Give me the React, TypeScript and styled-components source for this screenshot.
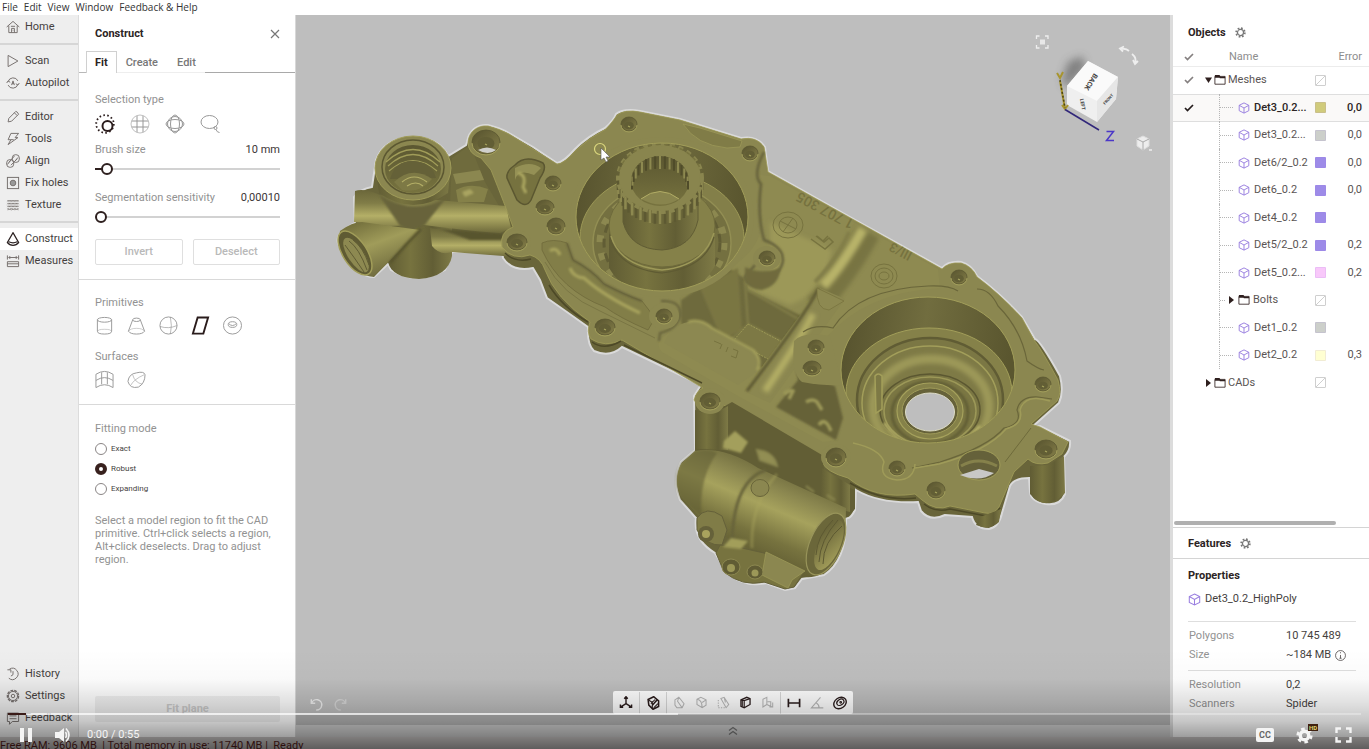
import React from "react";
import styled, { createGlobalStyle, css } from "styled-components";

const GlobalStyle = createGlobalStyle`
  * { box-sizing: border-box; }
  body { margin: 0; background: #fff; font: 11px/14px Roboto, "Liberation Sans", sans-serif; color: #453f3e; overflow: hidden; }
  button, input { font: inherit; color: inherit; margin: 0; }
  button { background: none; border: 0; padding: 0; cursor: pointer; }
  svg { display: block; flex: none; }
  h2, h3, p, dl, dd, fieldset, ul { margin: 0; padding: 0; border: 0; }
  h2, h3 { font-size: 11px; }
`;

/* ---------- layout ---------- */
const Page = styled.div`position: relative; display: flex; flex-direction: column; height: 100vh; overflow: hidden;`;
const MenuBar = styled.nav`
  display: flex; gap: 6px; flex: none; height: 15px; padding-left: 2px; background: #fff;
  font: 10px/15px "Open Sans", "Noto Sans", sans-serif;
  button { color: #333; }
`;
const Main = styled.div`display: flex; flex: 1; min-height: 0;`;
const Sidebar = styled.nav`
  display: flex; flex-direction: column; flex: none; width: 79px; padding: 1px 0 8px;
  background: #eee; border-right: 1px solid #dcdcdc;
`;
const NavItem = styled.button<{ $active?: boolean }>`
  display: flex; align-items: center; gap: 5px; height: 22px; padding-left: 6px; white-space: nowrap;
  background: ${p => (p.$active ? "#fff" : "transparent")};
  svg { color: ${p => (p.$active ? "#2a2020" : "#77716f")}; }
`;
const NavRule = styled.hr`width: 100%; height: 2px; margin: 5px 0; border: 0; background: #d6d6d6;`;
const Spacer = styled.div`flex: 1;`;

const Panel = styled.section`display: flex; flex-direction: column; flex: none; width: 217px; background: #fff; border-right: 1px solid #d8d8d8;`;
const PanelHead = styled.header`
  display: flex; align-items: center; justify-content: space-between; height: 36px; padding: 2px 15px 0 16px; color: #777;
  h2 { color: #2c2424; }
`;
const TabStrip = styled.div`display: flex; height: 22px; padding-left: 7px; background: linear-gradient(#b8b8b8, #b8b8b8) 0 100% / 7px 1px no-repeat, linear-gradient(90deg, #eee 126px, #a9a9a9 126px) 0 100% / 100% 1px no-repeat;`;
const Tab = styled.button<{ $active?: boolean }>`
  height: 22px; padding: 1px ${p => (p.$active ? 8 : 9)}px 0; font-weight: 500; color: #777;
  ${p => p.$active && css`color: #2c2424; font-weight: 700; background: #fff; border: 1px solid #d0d0d0; border-bottom: 0;`}
  & + & { margin-right: 1px; }
`;
const Block = styled.div`padding: 0 15px 0 16px; border-bottom: 1px solid #d9d9d9;`;
const BlockTitle = styled.h3<{ $top: number }>`padding-top: ${p => p.$top}px; font-weight: 400; color: #929292;`;
const IconRow = styled.div<{ $gap: number; $h: number }>`display: flex; align-items: center; gap: ${p => p.$gap}px; height: ${p => p.$h}px; margin-bottom: 3px; color: #989898;`;
const IconButton = styled.button<{ $active?: boolean; $muted?: boolean }>`color: ${p => (p.$active ? "#2a1c1c" : p.$muted ? "#b9b9b9" : "inherit")};`;
const SliderRow = styled.div`
  display: grid; grid-template-columns: 1fr auto; height: 48px; align-content: start;
  label { color: #929292; }
  output { color: #3c3535; }
`;
const Slider = styled.input<{ $fill: number }>`
  grid-column: 1 / -1; appearance: none; width: 100%; height: 12px; margin-top: 6px;
  background: linear-gradient(90deg, #2e201f ${p => p.$fill}px, #d2d2d2 ${p => p.$fill}px) center / 100% 2px no-repeat;
  &::-webkit-slider-thumb { appearance: none; width: 12px; height: 12px; border: 2px solid #2e201f; border-radius: 50%; background: #fff; }
`;
const ButtonPair = styled.div`display: grid; grid-template-columns: 1fr 1fr; gap: 10px; padding-bottom: 14px;`;
const OutlineButton = styled.button`height: 26px; border: 1px solid #dfdfdf; border-radius: 2px; color: #b9b9b9; font-weight: 500;`;
const BlockEnd = styled.div`height: 7px;`;
const Modes = styled.fieldset`display: grid; padding: 0 16px; row-gap: 8px; legend { padding: 17px 0 7px; color: #929292; }`;
const RadioLabel = styled.label`
  display: flex; align-items: center; gap: 4px; height: 12px; font-size: 8px; line-height: 12px;
  input { appearance: none; width: 12px; height: 12px; border: 1px solid #8a8585; border-radius: 50%; background: #fff; }
  input:checked { border: 4px solid #38211e; }
`;
const Hint = styled.p`padding: 19px 16px 0; line-height: 13px; color: #929292;`;
const FitButton = styled.button`height: 26px; margin: 0 15px 15px 16px; border-radius: 2px; background: #f0f0f0; color: #c9c9c9; font-weight: 700;`;

const Viewport = styled.main`position: relative; display: flex; flex-direction: column; flex: 1; min-width: 0; background: #bebebe;`;
const Scene = styled.div`display: flex; flex: 1; min-height: 0; & > svg { width: 100%; height: 100%; }`;
const UndoBar = styled.div`position: absolute; left: 14px; bottom: 26px; display: flex; gap: 11px; color: #eee; button + button { color: #d6d6d6; }`;
const ToolDock = styled.div`
  position: absolute; left: 50%; bottom: 23px; transform: translateX(-50%); display: flex; align-items: center;
  height: 23px; background: #fff; border-radius: 2px;
`;
const ToolGroup = styled.div`
  display: flex; align-items: center; height: 22px; gap: 9px; padding: 0 6px;
  & + & { border-left: 1px solid #d8d8d8; }
`;
const TimelineStrip = styled.div`flex: none; height: 11px; background: #b0b0b0;`;
const LogStrip = styled.button`display: flex; align-items: center; justify-content: center; flex: none; height: 12px; background: #cfcfcf; color: #777;`;

const Aside = styled.aside`display: flex; flex-direction: column; flex: none; width: 199px; background: #fff; border-left: 3px solid #dcdcdc;`;
const AsideHead = styled.header<{ $h: number }>`
  display: flex; align-items: center; gap: 9px; flex: none; height: ${p => p.$h}px; padding: 1px 0 0 15px; color: #777;
  h2 { color: #2c2424; }
`;
const Table = styled.table`
  width: 100%; border-collapse: collapse; table-layout: fixed;
  th, td { padding: 0; font-weight: 400; text-align: left; white-space: nowrap; }
  th { color: #8d8d8d; height: 17px; border-bottom: 1px solid #ececec; }
  th:last-child, td:last-child { text-align: right; padding-right: 7px; }
  th:nth-child(2) { padding-left: 24px; }
`;
const Row = styled.tr<{ $sel?: boolean }>`
  height: 27px; color: #5a5453;
  &:nth-child(even) { height: 28px; }
  ${p => p.$sel && css`background: #faf9f8; color: #2c2424; box-shadow: inset 0 1px #dedede, inset 0 -1px #dedede; td { font-weight: 500; }`}
`;
const Cell = styled.div<{ $pad?: number; $gap?: number }>`display: flex; align-items: center; height: 27px; gap: ${p => p.$gap ?? 4}px; padding-left: ${p => p.$pad ?? 0}px;`;
const Guide = styled.span<{ $w: number }>`
  flex: none; width: ${p => p.$w}px; height: 28px; border-left: 1px dotted #b5b5b5;
  background: repeating-linear-gradient(90deg, #b5b5b5 0 1px, transparent 1px 2px) 0 50% / 100% 1px no-repeat;
`;
const Swatch = styled.span<{ $c?: string }>`
  display: block; width: 11px; height: 11px; border-radius: 1px;
  ${p => (p.$c ? css`background: ${p.$c}; box-shadow: inset 0 0 0 1px rgba(160,130,230,.15);` : css`border: 1px solid #cfcfcf; background: linear-gradient(135deg, transparent 46%, #cfcfcf 46% 54%, transparent 54%);`)}
`;
const HScroll = styled.div`flex: none; width: 162px; height: 4px; margin: 0 0 2px 1px; border-radius: 2px; background: #b0b0b0;`;
const Features = styled.section`flex: none; border-top: 1px solid #d4d4d4; border-bottom: 1px solid #d4d4d4;`;
const Properties = styled.section`flex: none; height: 178px; padding: 10px 13px 0 15px; h3 { color: #2c2424; }`;
const PropName = styled.p`display: flex; align-items: center; gap: 4px; height: 32px; margin-bottom: 6px;`;
const PropList = styled.dl`
  display: grid; grid-template-columns: 97px 1fr; row-gap: 5px; padding: 7px 0 8px 1px; border-top: 1px solid #dedede;
  dt { color: #929292; }
  dd { display: flex; align-items: center; gap: 4px; }
`;
const StatusBar = styled.footer`flex: none; height: 12px; overflow: hidden; background: #cfcbca; color: #5a1f1c; line-height: 18px; white-space: nowrap;`;

const Player = styled.div`
  position: absolute; left: 0; right: 0; bottom: 0; height: 100px; padding: 64px 8px 0; pointer-events: none;
  background: linear-gradient(rgba(0,0,0,0) 0, rgba(0,0,0,.02) 30px, rgba(0,0,0,.12) 54px, rgba(0,0,0,.22) 72px, rgba(0,0,0,.36) 86px, rgba(0,0,0,.54) 100px);
`;
const Seek = styled.input`
  display: block; appearance: none; width: 100%; height: 2px;
  background: linear-gradient(90deg, #3a1b18 18px, rgba(255,255,255,.72) 18px, rgba(255,255,255,.72) 670px, rgba(255,255,255,.3) 670px);
  &::-webkit-slider-thumb { appearance: none; width: 0; height: 0; }
`;
const Controls = styled.div`display: flex; align-items: center; height: 34px; padding: 6px 9px 0 11px; color: #f4f4f4;`;
const VolumeButton = styled.button`margin-left: 21px;`;
const TimeText = styled.span`margin-left: 16px; line-height: 12px;`;
const ControlRight = styled.div`display: flex; align-items: center; gap: 22px; margin-left: auto;`;
const CC = styled.button`width: 18px; height: 14px; border-radius: 2px; background: #f4f4f4; color: #666; font-size: 9px; font-weight: 700; line-height: 14px;`;
const GearWrap = styled.button`position: relative;`;
const HD = styled.span`position: absolute; left: 12px; top: -3px; width: 10px; height: 7px; background: #40210f; color: #dfd36d; font-size: 6px; line-height: 7px; font-weight: 700;`;

/* ---------- icons ---------- */
const ICONS: Record<string, React.ReactNode> = {
  home: <><path d="M1 10 10 2l9 8M4 8v10h12V8M8 18v-6h4v6M10 14v1" /><path d="M7 9h6" /></>,
  scan: <path d="M3 2v16l14-8z" />,
  auto: <><path d="M3 8a7.5 7.5 0 0 1 14-1M17 12a7.5 7.5 0 0 1-14 1M1 10l2-3 3 2M19 10l-2 3-3-2M8 13l2-6 2 6M8.500 11h3" /></>,
  edit: <path d="M3 17l1-5L14 2q2 0 4 4L8 16zM12 4l4 4" />,
  tools: <path d="M7 2h11l-5 6h4L3 18l4-7H3zM7 11h4" />,
  align: <><rect x="1" y="8" width="10" height="11" rx="4.500" /><rect x="9" y="1" width="10" height="11" rx="4.500" /><path d="M4 12l8-9M7 16l9-9M2 15l4-5M13 10l4-5" /></>,
  holes: <><rect x="2" y="2" width="16" height="16" /><circle cx="10" cy="10" r="4" fill="#999" /></>,
  texture: <path d="M2 3l2 2 2-2 2 2 2-2 2 2 2-2 2 2 2-2M2 7l2 2 2-2 2 2 2-2 2 2 2-2 2 2 2-2M2 11l2 2 2-2 2 2 2-2 2 2 2-2 2 2 2-2M2 15l2 2 2-2 2 2 2-2 2 2 2-2 2 2 2-2M2 5l2-2 2 2 2-2 2 2 2-2 2 2 2-2 2 2M2 9l2-2 2 2 2-2 2 2 2-2 2 2 2-2 2 2M2 13l2-2 2 2 2-2 2 2 2-2 2 2 2-2 2 2M2 17l2-2 2 2 2-2 2 2 2-2 2 2 2-2 2 2" strokeWidth="1" />,
  cone: <path d="M10 1 2 15q3 4 8 4t8-4zM4 14q6 3 12 0" strokeWidth="1.800" />,
  measure: <><path d="M2 2v6M18 2v6M4 5h12M6 3 4 5l2 2M14 3l2 2-2 2" /><path d="M2 11h16v7H2zM2 14h16" /></>,
  history: <path d="M5 3a8 8 0 1 1-1 13M2 4h5v4M10 6v5l-3 2" />,
  settings: <><circle cx="10" cy="10" r="8" strokeDasharray="4 1.500" strokeWidth="2" /><circle cx="10" cy="10" r="6.500" /><circle cx="10" cy="10" r="2.500" /></>,
  feedback: <path d="M2 3h16v12H9l-4 4v-4H2zM5 7h10M5 11h10" />,
  close: <path d="M2 2l16 16M18 2 2 18" />,
  brush: <><circle cx="10" cy="10" r="8.800" strokeDasharray="1.600 2.350" strokeWidth="1.800" /><circle cx="12.500" cy="12" r="5" strokeWidth="2" fill="#fff" /></>,
  rect: <><circle cx="10" cy="10" r="9" strokeOpacity=".6" /><path d="M7 2v16M13 2v16M2 7h16M2 13h16" /></>,
  sphereSel: <><circle cx="10" cy="10" r="7.500" /><ellipse cx="10" cy="10" rx="4.500" ry="9" /><ellipse cx="10" cy="10" rx="9" ry="4.500" /></>,
  lasso: <><ellipse cx="9.500" cy="8" rx="8.500" ry="6.500" /><circle cx="15.500" cy="14" r="1.500" /><path d="M16 15.500q1 3 3.500 3" /></>,
  cyl: <><ellipse cx="10" cy="4" rx="7.500" ry="2.500" /><path d="M2.500 4v12q0 3 7.500 3t7.500-3V4" /><path d="M3 16q0-2 7-2t7 2" strokeOpacity=".5" /></>,
  frustum: <><ellipse cx="10" cy="4" rx="4" ry="1.800" /><path d="M6 4 1.500 16q2 3 8.500 3t8.500-3L14 4" /><path d="M1.500 16q2-3 8.500-3t8.500 3" strokeOpacity=".5" /></>,
  ball: <><circle cx="10" cy="10" r="9" /><path d="M12 1q2 9 0 18M1 11q9 3 18-1" strokeOpacity=".7" /></>,
  plane: <path d="M7 1.500h11L13 18.500H2z" strokeWidth="2" />,
  torus: <><ellipse cx="10" cy="10" rx="9.500" ry="9" /><ellipse cx="10" cy="9" rx="4.500" ry="3" /><path d="M6 8q4 4 8 0" /></>,
  surf: <path d="M1 4.500q9-6 18 0v14q-9-6-18 0zM7 2.500v12.500M13 2.500v12.500M1 11q9-6 18 0" />,
  blob: <><path d="M1 12Q2 4 10 3q8-2 9 2 0 9-7 13-9 2-11-6z" /><path d="M6 5q2 8 10 10M4 16q3-6 14-11" strokeOpacity=".6" /></>,
  cube: <path d="M10 1.500 18 5.500v9L10 18.500 2 14.500v-9zM2 5.500 10 10l8-4.500M10 10v8.500" />,
  folder: <><path d="M1.500 4h17v13h-17z" /><path d="M1.500 3h7l2 3h8M1.500 5h8" strokeWidth="2.500" /></>,
  check: <path d="M2 10l5 5L18 4" strokeWidth="3.400" />,
  gear: <><circle cx="10" cy="10" r="5.500" strokeWidth="2.200" /><circle cx="10" cy="10" r="8" strokeDasharray="3.140 3.140" strokeWidth="3" /></>,
  info: <><circle cx="10" cy="10" r="9" /><path d="M10 4v2M10 9v6M8 15h4" /></>,
  undo: <path d="M2 2v6h6M2.500 8a8 8 0 1 1 7 10.500" strokeWidth="2.200" />,
  redo: <path d="M18 2v6h-6M17.500 8a8 8 0 1 0-7 10.500" strokeWidth="2.200" />,
  axes: <path d="M10 11V2M10 11l-8 5M10 11l8 5M7.500 4 10 1l2.500 3M2 12v4h4M18 12v4h-4" strokeWidth="2" />,
  section: <><path d="M3 5l8-4 7 6v8l-8 4-6-6z" strokeWidth="2.200" /><path d="M8 15l8-9M7 11l6-6M11 17l6-6M9 13l6-7M4 6l5 3v9" strokeWidth="1.500" /></>,
  cutA: <path d="M3 6l6-4 8 10-3 6H6l-3-4zM9 2 7 8l7 10" />,
  cutB: <path d="M3 5l6-3 8 4v8l-6 4-8-5zM3 5q8 1 8 13M11 10l6-4" />,
  cutC: <><path d="M6 4l5-2 7 11-4 5zM11 2l2 8" /><path d="M2 6v12h11" strokeDasharray="2 2" /></>,
  box: <><path d="M3 6l9-4 5 2v9l-9 5-5-2z" strokeWidth="2" /><path d="M8 7v11M3 6l5 1 9-3M5 7v9" strokeWidth="1.800" /></>,
  wing: <path d="M3 5l6-3v11l-6 4zM10 9h5v6M9 13l8 4M18 10v7h-5" />,
  ruler: <path d="M2 4v12M18 4v12M2 10h16" strokeWidth="2.400" />,
  angle: <path d="M15 2 2 17h17M9 10q4 2 4 7" />,
  rings: <><ellipse cx="10" cy="10" rx="9.500" ry="7.500" transform="rotate(-35 10 10)" strokeWidth="2" /><ellipse cx="11" cy="9.500" rx="5.500" ry="4" transform="rotate(-35 10 10)" strokeWidth="1.700" /><circle cx="11" cy="9" r="1.200" /></>,
  up: <path d="M2 9l8-6 8 6M2 17l8-6 8 6" strokeWidth="2.400" />,
};
function Icon({ n, s = 13, w = 1.4 }: { n: string; s?: number; w?: number }) {
  return <svg width={s} height={s} viewBox="0 0 20 20" fill="none" stroke="currentColor" strokeWidth={w} aria-hidden="true">{ICONS[n]}</svg>;
}

/* ---------- scanned casting ---------- */
const F = "#8b8750";
function Hole({ x, y, rx = 8, ry = 7, lug = 0 }: { x: number; y: number; rx?: number; ry?: number; lug?: number }) {
  return <g>
    {lug > 0 && <ellipse cx={x} cy={y} rx={lug} ry={lug - 2} fill={F} />}
    <ellipse cx={x} cy={y} rx={rx} ry={ry} fill="url(#holeG)" stroke="#5b5731" strokeWidth=".8" />
    <ellipse cx={x} cy={y + 1.5} rx={rx * 0.6} ry={ry * 0.55} fill="#625e35" />
    <path d={`M${x - rx} ${y + 1}a${rx} ${ry} 0 0 0 ${rx * 2} 0`} fill="none" stroke="#a39f5c" strokeWidth="1" />
    <path d={`M${x - 1} ${y + 2}l2 1`} stroke="#aaa660" strokeWidth="1.200" />
  </g>;
}
const SIL = "M467 142C469 130 478 124 488 125Q500 128 509 133L533 147 557 163Q564 162 575 149Q588 136 605 128 614 120 616 114 624 108 640 111L680 119 741 138Q757 135 765 147L768 171 859 222 942 268Q948 261 961 262 972 265 977 276 1000 293 1022 317L1035 339Q1040 340 1060 376 1064 392 1059 403L1031 428 1040 426 1070 441Q1071 450 1064 457L1065 494Q1060 506 1046 504 1031 502 1030 492L1029 478Q1014 478 1010 486L1002 513Q999 527 989 529 975 529 972 517L945 515Q930 522 921 511L918 502Q880 504 856 490L855 510Q850 520 846 518 847 560 824 575L802 579 795 588 785 590 766 583Q745 588 727 573L715 553Q693 540 696 518L680 500Q672 480 681 462L695 450 694 396 701 385 622 347Q610 358 594 351 587 345 588 327 567 312 547 298L540 280 533 268Q512 272 503 258L502 251 452 252 445 270Q417 286 391 270L388 264 374 277Q355 277 338 243 335 233 355 223L354 197Q360 189 372 187L376 160Q384 138 413 137 440 138 448 156L466 145Z";

function Casting() {
  const teeth = Array.from({ length: 27 }, (_, i) => {
    const a = (i / 26) * Math.PI;
    return { x: 660 + Math.cos(a) * 42, y: 179 + Math.sin(a) * 34 };
  });
  const splines = Array.from({ length: 19 }, (_, i) => {
    const a = Math.PI + (i / 18) * Math.PI;
    return { x: 660 + Math.cos(a) * 28, y: 181 + Math.sin(a) * 25 };
  });
  return <g>
    <path d={SIL} fill="#69653a" stroke="#dadada" strokeWidth="2" />
    {/* intake pipes */}
    <path d="M388 218H452V256Q448 277 419 279 392 278 388 262Z" fill="url(#cylV)" />
    <path d="M430 228 515 240V257L452 252Q440 256 432 246Z" fill="url(#tubeH)" />
    <path d="M452 158 470 145 485 182 512 228 450 205Z" fill="#6f6b3d" />
    <path d="M453 174 480 170 484 180 456 184Z" fill={F} /><path d="M456 190Q470 182 488 189L484 202H458Z" fill="#858149" />
    <path d="M462 192l8-3 4 4-9 4z" fill="#b9b46c" opacity=".7" filter="url(#b1)" />
    <path d="M440 229 510 234 511 240 470 240Z" fill="#59552f" filter="url(#b1)" />
    <path d="M355 191Q364 188 380 195L448 201 506 206 511 228 500 233Q460 230 424 225L388 226 354 222Z" fill="url(#tubeH)" />
    <path d="M379 195Q413 216 446 198L424 226 412 230 400 226Z" fill="#67633a" filter="url(#b1)" />
    <path d="M340 231Q352 222 362 222L420 230Q400 250 374 277 350 275 338 244Z" fill="url(#tubeD)" />
    <path d="M421 229Q404 246 390 263" fill="none" stroke="#59552f" strokeWidth="3" filter="url(#b1)" />
    <ellipse cx="355" cy="253" rx="12" ry="25" transform="rotate(-33 355 253)" fill="#5f5b33" stroke="#a19d59" strokeWidth="1.500" />
    <ellipse cx="356" cy="255" rx="8" ry="20" transform="rotate(-33 356 255)" fill="#8d8951" /><path d="M349 241q10 7 18 29M353 240q10 7 16 25M345 245q9 12 19 27" stroke="#605c34" fill="none" />
    <path d="M375 165 379 193Q413 217 448 193L451 165Z" fill="url(#cylV)" />
    <ellipse cx="413" cy="168" rx="38" ry="32" fill={F} stroke="#a09c59" />
    <ellipse cx="413" cy="167" rx="31" ry="27" fill="#8b8750" stroke="#5b5731" strokeWidth="1.500" />
    <ellipse cx="413" cy="169" rx="28" ry="24" fill="url(#bore)" />
    <g fill="none" stroke="#a19d59" strokeWidth="1.200"><path d="M386 162Q413 137 440 162M388 166Q413 143 438 166M389 171Q413 150 437 171" /></g>
    <path d="M390 179Q396 160 413 161 432 162 436 178" fill="#656138" />
    <path d="M394 182Q412 165 432 179 420 194 402 190Z" fill="#7d7945" /><path d="M402 182Q414 172 427 182M407 186Q416 180 423 186" fill="none" stroke="#b4af67" strokeWidth="1.200" />

    {/* mounting faces */}
    <path d="M468 142C469 131 478 125 488 126Q500 129 509 134L557 164Q564 164 576 150 590 137 606 129 614 120 617 115 625 109 640 112L680 120 741 139Q757 136 764 147L768 172 942 269Q948 262 961 263 972 266 977 277 1000 294 1022 318L1034 340Q1042 350 1058 380 1062 394 1057 401L1031 424 1040 427 1068 442 1062 454 1048 463Q1035 466 1028 459L1014 472 999 507Q994 515 985 513L950 506Q936 512 922 500L915 494Q875 500 848 478 826 472 822 462L722 404Q704 416 694 400 697 390 703 388L622 340Q605 348 591 339 586 332 590 322 555 298 545 270 541 258 530 255 513 261 502 247 499 232 513 227 505 205 491 170L481 158Q468 154 468 142Z" fill={F} stroke="#a19d59" strokeWidth=".8" />
    <path d="M592 342Q604 351 621 341M624 345 702 383M850 483Q882 502 916 498M924 504Q935 513 950 509L986 516Q994 517 1000 508M549 285Q562 307 588 322M505 253Q515 263 531 259" stroke="#4d4927" fill="none" strokeWidth="1.500" />

    {/* engraved deck and casting pockets */}
    <path d="M760 175 770 176 938 269 940 288Q865 292 825 339L798 352 794 372Q805 400 838 440L823 442 738 396 662 352Q650 340 680 328L681 298 730 268Q760 250 762 222Z" fill="#8e8a51" />
    <path d="M770 222 832 250 822 290 790 305 748 288 770 275Z" fill="#9c9858" filter="url(#b2)" />
    <path d="M681 300 728 268 744 278 748 290 806 318 787 375 758 366 720 343 681 324Z" fill="#6e6a3c" filter="url(#b1)" />
    <path d="M700 288 738 268 742 330 722 340Z" fill="#7a7643" filter="url(#b1)" />
    <path d="M745 280 748 325 730 340M748 324 788 345M748 290 800 320" stroke="#837f49" fill="none" strokeWidth="2" filter="url(#b1)" />
    <path d="M748 324 786 344 772 361 733 341Z" fill="#7d7945" stroke="#a5a15c" strokeWidth=".8" strokeDasharray="2 1" />
    <path d="M688 322Q700 318 712 328L753 350Q764 360 754 374L738 385 664 343Q672 325 688 322Z" fill="#8c8851" />
    <path d="M688 322Q700 318 712 328L753 350Q763 360 757 370" fill="none" stroke="#a29e5a" strokeWidth="2.500" filter="url(#b1)" />
    <path d="M868 232Q848 270 816 306" stroke="#59552f" strokeWidth="25" fill="none" filter="url(#b2)" opacity=".4" />
    <path d="M863 229Q842 266 823 286" stroke="#b8b369" strokeWidth="10" fill="none" filter="url(#b2)" />
    <path d="M849 232Q838 258 815 282" stroke="#827e48" strokeWidth="4" fill="none" filter="url(#b1)" />
    <path d="M820 288 845 299 770 403 744 391Z" fill="#8b8750" /><path d="M818 289Q811 307 747 391" stroke="#605c34" strokeWidth="3" fill="none" filter="url(#b1)" />
    <path d="M813 314Q800 340 765 391" stroke="#b3ae65" strokeWidth="7" fill="none" filter="url(#b2)" />
    <path d="M817 288 844 301 829 310Q816 310 817 288Z" fill="#8d8951" stroke="#78743f" strokeWidth=".8" />
    <path d="M797 372 835 386 843 418 836 440 776 407 798 380Z" fill="#666239" filter="url(#b1)" />
    <path d="M784 394q6-5 9-3l-4 8M806 402q7-4 11 0l5 8M819 425q6-9 12 6" stroke="#9c9858" strokeWidth="3.500" fill="none" filter="url(#b1)" />
    <g fill="#76723f" fontFamily="Roboto" fontWeight="500"><text transform="translate(855 221) rotate(208)" fontSize="14">1 707 305</text><text transform="translate(913 253) rotate(208)" fontSize="13">III/3</text></g>
    <g fill="none" stroke="#77733f"><ellipse cx="788" cy="225" rx="15" ry="13" /><ellipse cx="788" cy="225" rx="9" ry="8" /><path d="M780 221l16 8M793 218l-10 14" /><ellipse cx="884" cy="276" rx="13" ry="12" /><ellipse cx="884" cy="276" rx="9" ry="8" /><ellipse cx="884" cy="276" rx="5" ry="4" /><path d="M811 239l14 10 8-7-4-4-5 4-8-6M817 236l6 5 5-5" strokeWidth="1.500" /><path d="M714 341l7 3M722 344l-2 5M728 347l-2 5M733 349l5 2-2 7-5-2" /></g>

    {/* recesses round the first bearing seat */}
    <path d="M515 165Q525 154 543 163 547 168 540 178L531 200Q526 209 517 200L507 178Q506 171 515 165Z" fill="#76723f" stroke="#5b5731" strokeWidth="1.500" />
    <path d="M515 168Q530 160 541 168L534 175Q518 168 515 180Z" fill="#949055" /><path d="M518 173q9 2 5 14l3 6" fill="none" stroke="#aca761" strokeWidth="3" filter="url(#b1)" />
    <path d="M542 243Q553 238 567 243L573 260Q592 270 604 284 625 295 642 301L655 318 648 330Q620 318 605 307 560 290 542 250Z" fill="#827e48" stroke="#6e6a3b" strokeWidth=".8" />
    <path d="M550 251q6-5 10 4M570 268q3 9 14 10 20 18 56 35" fill="none" stroke="#a6a15c" strokeWidth="3.500" filter="url(#b1)" />
    <path d="M567 243 573 260Q592 270 604 284 625 295 642 301" fill="none" stroke="#65613a" strokeWidth="2" filter="url(#b1)" />
    <path d="M545 262Q562 295 600 311L655 338" fill="none" stroke="#7a7644" strokeWidth="1" />
    <path d="M683 124Q696 145 727 148L740 147 742 141 700 128Z" fill="#807c47" stroke="#9c9858" strokeWidth=".8" />
    <path d="M764 152Q752 175 761 184 757 215 764 240 783 247 783 260 781 275 764 280 748 289 745 277L755 265" fill="none" stroke="#65613a" strokeWidth="2.500" filter="url(#b1)" />
    <path d="M745 267Q760 275 780 268 780 285 762 290 748 290 745 278Z" fill="#6f6b3d" filter="url(#b1)" />
    <path d="M661 301Q682 300 680 316 677 329 660 333L659 341" fill="none" stroke="#65613a" strokeWidth="2" filter="url(#b1)" />

    <ellipse cx="662" cy="217" rx="92" ry="80" fill={F} />
    <g clipPath="url(#c1)">
      <ellipse cx="662" cy="217" rx="87" ry="74" fill="url(#wall)" />
      <ellipse cx="662" cy="238" rx="82" ry="65" fill="#837f49" stroke="#9c9857" />
      <ellipse cx="662" cy="243" rx="69" ry="58" fill="#747040" stroke="#928e53" strokeWidth="1.500" />
      <ellipse cx="662" cy="243" rx="62" ry="52" fill="none" stroke="#8c8850" strokeWidth="7" strokeDasharray="7 11" />
      <ellipse cx="662" cy="243" rx="58" ry="50" fill="none" stroke="#615d35" strokeWidth="3" strokeDasharray="9 6" />
      <path d="M609 222V268Q625 296 662 296 700 295 715 266V222Z" fill="url(#cylV)" />
    </g>
    <ellipse cx="662" cy="226" rx="53" ry="41" fill="#858149" stroke="#6e6a3b" />
    <path d="M611 236Q620 266 662 270 704 266 714 233" fill="none" stroke="#9c9858" strokeWidth="1.500" />
    <path d="M610 239Q620 269 662 273 705 268 714 237" fill="none" stroke="#5f5b33" strokeWidth="1.200" />
    <path d="M623 190V222Q630 249 662 250 692 248 698 220V190Z" fill="url(#cylV)" stroke="#605c34" />
    <path d="M618 178V196Q630 222 661 224 694 220 702 194V178Z" fill="#6b673a" />
    {teeth.map((t, i) => <path key={i} d={`M${t.x} ${t.y - 2}v13`} stroke={i % 2 ? "#8d8950" : "#5d5932"} strokeWidth="2.500" />)}
    <ellipse cx="660" cy="178" rx="41" ry="33" fill="#89854e" />
    <ellipse cx="660" cy="178" rx="42" ry="34" fill="none" stroke="#89854e" strokeWidth="4" strokeDasharray="5 4" />
    <path d="M619 171Q627 147 660 144 693 147 701 171" fill="none" stroke="#77733f" strokeWidth="1.500" strokeDasharray="4 4" />
    <ellipse cx="660" cy="181" rx="29" ry="25" fill="url(#bore)" />
    {splines.map((t, i) => <path key={i} d={`M${t.x} ${t.y}v${13 - Math.abs(i - 9) / 2}`} stroke={i % 2 ? "#8d8950" : "#504c2a"} strokeWidth="2" />)}
    <path d="M641 199Q660 184 679 199 662 210 641 199Z" fill="#88844d" /><path d="M641 199Q660 184 679 199" fill="none" stroke="#b1ac65" />
    <ellipse cx="662" cy="217" rx="86" ry="74" fill="none" stroke="#a19d59" strokeWidth="1" />

    {/* second bearing seat */}
    <path d="M803 332Q815 324 833 328 858 289 928 286 949 285 958 291M977 289Q990 289 998 306 1021 329 1027 361 1038 369 1044 370M1052 399 1038 397Q1020 396 1017 410 1023 424 1004 428 988 447 940 462L912 468" fill="none" stroke="#6a663a" strokeWidth="1.200" />
    <path d="M1050 401Q1025 393 1020 410 1024 424 1006 429 987 451 939 464L915 468M853 443Q880 449 884 462 878 478 897 480 914 480 915 464" fill="none" stroke="#9f9b59" strokeWidth="1.500" />
    <g clipPath="url(#c2)">
      <ellipse cx="928" cy="370" rx="87" ry="73" fill="url(#wall)" />
      <ellipse cx="929" cy="393" rx="83" ry="65" fill="#858149" stroke="#a29e5a" />
      <ellipse cx="930" cy="400" rx="73" ry="62" fill="#7b7744" stroke="#605c34" strokeWidth="2.500" />
      <ellipse cx="930" cy="403" rx="68" ry="57" fill="#7e7a46" stroke="#a29e5a" strokeWidth="1.500" />
      <ellipse cx="931" cy="407" rx="58" ry="48" fill="none" stroke="#9c9858" strokeWidth="9" filter="url(#b2)" />
      <ellipse cx="930" cy="410" rx="50" ry="36" fill="#7a7643" stroke="#5b5731" strokeWidth="1.500" />
      <ellipse cx="930" cy="411" rx="46" ry="34" fill="none" stroke="#9c9858" strokeWidth="1.500" />
      <ellipse cx="930" cy="413" rx="38" ry="31" fill="none" stroke="#625e35" strokeWidth="3" filter="url(#b1)" />
      <path d="M875 376q3-4 7 0v33l-6 4z" fill="#7d7945" stroke="#a39f5a" strokeWidth="1.500" />
      <path d="M884 423Q898 446 928 448 962 447 980 426" fill="none" stroke="#b3ae66" strokeWidth="3" filter="url(#b1)" />
    </g>
    <ellipse cx="930" cy="411" rx="33" ry="28" fill="#858149" stroke="#a5a15c" strokeWidth="1.200" />
    <ellipse cx="930" cy="411" rx="28" ry="23" fill="#66623a" stroke="#9f9b59" />
    <ellipse cx="930" cy="412" rx="24.500" ry="19" fill="#bebebe" stroke="#deddc8" />
    <ellipse cx="928" cy="370" rx="87" ry="73" fill="none" stroke="#a19d59" />
    <ellipse cx="979" cy="465" rx="21" ry="15" fill="#65613a" stroke="#a19d59" />
    <path d="M961 466Q978 456 997 466" fill="none" stroke="#85814b" strokeWidth="3" /><path d="M960 475 979 469 994 473Q980 483 960 475Z" fill="#c8c8c6" />
    <path d="M1031 428 1005 462" stroke="#6e6a3b" /><path d="M1030 466V494Q1046 513 1065 493L1064 456 1048 465Z" fill="url(#cylV)" />
    <path d="M980 517 1001 509 999 522Q990 531 976 525Z" fill="url(#cylV)" />

    {/* lower actuator barrel */}
    <path d="M695 410Q710 416 732 402L822 455 825 478 855 490V509L846 518 800 500 720 460 695 451Z" fill="#625e35" />
    <path d="M697 410Q708 418 728 406V450L695 449Z" fill="url(#cylV)" /><path d="M822 468 850 485V512L838 509 820 498Z" fill="url(#cylV)" />
    <path d="M724 441 735 431 748 442 741 453 723 448Z" fill="#a39f5b" filter="url(#b1)" />
    <path d="M757 450Q774 452 777 466L760 460ZM806 486l8 6M827 495l8 5" fill="#928e53" stroke="#8b8750" strokeWidth="2" filter="url(#b1)" />
    <path d="M695 451Q724 446 758 468L846 508Q846 560 823 573 805 583 790 570L738 543Q710 530 698 515L681 497Q673 480 681 464Z" fill="url(#barrel)" />
    <path d="M695 451Q710 448 717 453 698 480 702 517L681 499Q671 480 681 463Z" fill="#625e35" opacity=".6" filter="url(#b1)" />
    <path d="M766 470Q734 480 732 541" fill="none" stroke="#67633a" strokeWidth="3" filter="url(#b1)" />
    <path d="M777 474Q750 505 752 548" fill="none" stroke="#aca75f" strokeWidth="3" opacity=".4" filter="url(#b1)" />
    <ellipse cx="826" cy="544" rx="16" ry="33" transform="rotate(24 826 544)" fill="#6b673a" stroke="#98945a" strokeWidth="1.200" />
    <ellipse cx="829" cy="545" rx="11" ry="27" transform="rotate(24 829 545)" fill="url(#mouth)" />
    <path d="M819 562q1-22 19-42M823 564q0-22 19-38M816 555q1-19 17-35" fill="none" stroke="#5d5932" />
    <ellipse cx="760" cy="488" rx="9" ry="8.500" fill="#8b8750" stroke="#6a663a" />
    <path d="M697 518Q706 505 722 516L727 530 722 545Q706 546 697 530Z" fill="#807c47" stroke="#65613a" /><ellipse cx="706" cy="534" rx="8" ry="8" fill="#65613a" /><ellipse cx="706" cy="534" rx="4" ry="4" fill="#a8a35e" />
    <path d="M720 545 742 548 764 553 804 572 794 587 785 589 764 582Q742 587 724 572L716 553Z" fill="#77733f" stroke="#65613a" />
    <path d="M723 547 741 549 748 541 731 538Z" fill="#a29e5a" filter="url(#b1)" /><path d="M766 552 805 571 792 580 788 588 762 575Z" fill="#8b8750" stroke="#9c9858" strokeWidth=".8" />
    <g fill="#605c34" stroke="#8d8951"><ellipse cx="731" cy="567" rx="9" ry="8" /><ellipse cx="755" cy="572" rx="8" ry="7" /></g><g fill="#9c9858"><circle cx="731" cy="568" r="4" /><circle cx="755" cy="573" r="3.500" /></g>

    <Hole x={486} y={142} rx={14} ry={12} /><path d="M478 150q9-5 18 0-8 6-18 0z" fill="#d0d0cc" />
    <Hole x={629} y={124} /><Hole x={750} y={153} rx={8} /><Hole x={767} y={258} lug={14} /><Hole x={664} y={316} lug={15} />
    <Hole x={605} y={327} rx={10} ry={8} /><Hole x={517} y={242} rx={10} ry={8} lug={14} /><Hole x={553} y={183} /><Hole x={545} y={207} rx={9} /><Hole x={556} y={226} rx={9} ry={8} />
    <path d="M794 341Q803 331 830 336L842 385Q824 386 802 382 791 374 794 341Z" fill={F} /><Hole x={816} y={347} /><Hole x={812} y={368} rx={9} />
    <Hole x={959} y={277} /><Hole x={1043} y={384} /><Hole x={897} y={468} /><Hole x={936} y={490} rx={9} ry={8} /><Hole x={1046} y={449} rx={11} ry={9} />
    <Hole x={710} y={401} rx={10} ry={8} lug={15} /><Hole x={836} y={457} rx={10} ry={9} lug={15} />
    <circle cx="600" cy="149" r="5.500" fill="none" stroke="#dcd87e" strokeWidth="1.200" />
    <path d="M601 148v12l3-2 2 4 2-1-2-4h4z" fill="#fff" stroke="#555" strokeWidth=".6" />
  </g>;
}

function NavCube() {
  return <g>
    <g fill="none" stroke="#eee" strokeWidth="1.300"><path d="M1036.500 39v-3h3M1045 36h3v3M1048 45v3h-3M1039.500 48h-3v-3" /><path d="M1121 49q5-1 8 2M1124 46.500l-4 2 3 3M1132 54q5 4 3 9M1133 60l2 4 3-3" strokeWidth="1.800" /></g>
    <rect x="1040" y="39.500" width="5" height="5" fill="#e8e8e8" />
    <path d="M1068 62l14-6 4 12-20 20-4-8z" fill="#444" opacity=".5" filter="url(#b3)" />
    <path d="M1088 61 1118 77 1116 99 1097 122 1067 105V86Z" fill="#efefef" />
    <path d="M1088 61 1118 77 1097 101 1067 86Z" fill="#fafafa" /><path d="M1118 77 1116 99 1097 122V101Z" fill="#e6e6e6" />
    <g fill="#444" fontFamily="Roboto" fontWeight="700"><text transform="translate(1094 73) rotate(123)" fontSize="7">BACK</text><text transform="translate(1080 99) rotate(80)" fontSize="5">LEFT</text><text transform="translate(1105 105) rotate(-48)" fontSize="4">FRONT</text></g>
    <path d="M1060 81l5 28M1057 73l3 5 3-6M1062 105l3 4 3-4" stroke="#a8952e" strokeWidth="2" fill="none" /><path d="M1060 80l5 28" stroke="#4d4410" strokeWidth="1.500" strokeDasharray="2 2" />
    <path d="M1065 109.500 1099 130" stroke="#31277a" strokeWidth="1.500" /><path d="M1106.500 131.500h7l-7 9h7.500" fill="none" stroke="#4b37c8" strokeWidth="1.500" />
    <path d="M1137 139l6-3 6 3v7l-6 4-6-4z" fill="#ededed" stroke="#ddd" /><path d="M1137 139l6 3 6-3M1143 142v8" stroke="#aaa" fill="none" /><path d="M1149 150h3" stroke="#eee" strokeWidth="1.500" />
  </g>;
}

function SceneView() {
  return <Scene><svg viewBox="296 15 874 699" preserveAspectRatio="xMidYMid meet" role="img" aria-label="3D scan">
    <defs>
      <linearGradient id="holeG" x1="0" y1="0" x2="1" y2="1"><stop offset="0" stopColor="#56522e" /><stop offset="1" stopColor="#857f49" /></linearGradient>
      <linearGradient id="cylV"><stop offset="0" stopColor="#605c34" /><stop offset=".35" stopColor="#77733f" /><stop offset=".7" stopColor="#625e35" /><stop offset="1" stopColor="#7e7a46" /></linearGradient>
      <linearGradient id="tubeH" x1="0" y1="0" x2="0" y2="1"><stop offset="0" stopColor="#6b673a" /><stop offset=".3" stopColor="#807c47" /><stop offset=".6" stopColor="#b4af67" /><stop offset="1" stopColor="#6d693b" /></linearGradient>
      <linearGradient id="tubeD" x1=".3" y1="0" x2=".8" y2=".9"><stop offset="0" stopColor="#77733f" /><stop offset=".4" stopColor="#a09c5a" /><stop offset="1" stopColor="#68643a" /></linearGradient>
      <linearGradient id="bore" x1="0" y1="0" x2="0" y2="1"><stop offset="0" stopColor="#5b5731" /><stop offset="1" stopColor="#77733f" /></linearGradient>
      <linearGradient id="wall" x1="0" y1="0" x2="1" y2=".1"><stop offset="0" stopColor="#55512d" /><stop offset=".5" stopColor="#716d3f" /><stop offset="1" stopColor="#5a562f" /></linearGradient>
      <linearGradient id="barrel" gradientUnits="userSpaceOnUse" x1="780" y1="465" x2="740" y2="560"><stop offset="0" stopColor="#6a663a" /><stop offset=".22" stopColor="#8a864f" /><stop offset=".42" stopColor="#a6a25d" /><stop offset=".7" stopColor="#77733f" /><stop offset="1" stopColor="#5a562f" /></linearGradient>
      <linearGradient id="mouth" x1="0" y1="0" x2="1" y2="1"><stop offset="0" stopColor="#5d5932" /><stop offset="1" stopColor="#aaa55e" /></linearGradient>
      <filter id="b1" x="-20%" y="-20%" width="140%" height="140%"><feGaussianBlur stdDeviation="1" /></filter>
      <filter id="b2" x="-30%" y="-30%" width="160%" height="160%"><feGaussianBlur stdDeviation="2" /></filter>
      <filter id="b3" x="-50%" y="-50%" width="200%" height="200%"><feGaussianBlur stdDeviation="4" /></filter>
      <clipPath id="c1"><ellipse cx="662" cy="217" rx="86" ry="74" /></clipPath>
      <clipPath id="c2"><ellipse cx="928" cy="370" rx="87" ry="73" /></clipPath>
    </defs>
    <Casting /><NavCube />
  </svg></Scene>;
}

/* ---------- data ---------- */
const NAV: ([string, string] | null)[] = [["home", "Home"], null, ["scan", "Scan"], ["auto", "Autopilot"], null, ["edit", "Editor"], ["tools", "Tools"], ["align", "Align"], ["holes", "Fix holes"], ["texture", "Texture"], null, ["cone", "Construct"], ["measure", "Measures"]];
type Item = { name: string; kind: "root" | "mesh" | "group"; open?: boolean; color?: string; error?: string; sel?: boolean };
const ITEMS: Item[] = [
  { name: "Meshes", kind: "root", open: true },
  { name: "Det3_0.2...", kind: "mesh", color: "#d0cb7b", error: "0,0", sel: true },
  { name: "Det3_0.2...", kind: "mesh", color: "#cccfca", error: "0,0" },
  { name: "Det6/2_0.2", kind: "mesh", color: "#9d8be8", error: "0,0" },
  { name: "Det6_0.2", kind: "mesh", color: "#9d8be8", error: "0,0" },
  { name: "Det4_0.2", kind: "mesh", color: "#9d8be8" },
  { name: "Det5/2_0.2", kind: "mesh", color: "#9d8be8", error: "0,2" },
  { name: "Det5_0.2...", kind: "mesh", color: "#f8c8fa", error: "0,2" },
  { name: "Bolts", kind: "group" },
  { name: "Det1_0.2", kind: "mesh", color: "#cccfca" },
  { name: "Det2_0.2", kind: "mesh", color: "#ffffd2", error: "0,3" },
  { name: "CADs", kind: "root" },
];
const Twist = ({ open }: { open?: boolean }) => <svg width="7" height="8" viewBox="0 0 7 8" fill="#2e1f1e"><path d={open ? "M0 1.500h7L3.500 7z" : "M1 0l5 4-5 4z"} /></svg>;
const Violet = styled.span`color: #9a7fe0;`;
const Dark = styled.span`color: #2e1f1e;`;
const CheckMark = styled.span<{ $dark?: boolean }>`display: flex; justify-content: center; color: ${p => (p.$dark ? "#241c1c" : "#858080")};`;

export default function App() {
  return <Page>
    <GlobalStyle />
    <MenuBar>{["File", "Edit", "View", "Window", "Feedback & Help"].map(m => <button key={m}>{m}</button>)}</MenuBar>
    <Main>
      <Sidebar>
        {NAV.map((n, i) => n ? <NavItem key={i} $active={n[1] === "Construct"}><Icon n={n[0]} s={14} />{n[1]}</NavItem> : <NavRule key={i} />)}
        <Spacer />
        <NavItem><Icon n="history" s={14} />History</NavItem>
        <NavItem><Icon n="settings" s={14} />Settings</NavItem>
        <NavItem><Icon n="feedback" s={14} />Feedback</NavItem>
      </Sidebar>

      <Panel>
        <PanelHead><h2>Construct</h2><IconButton aria-label="Close"><Icon n="close" s={10} w={2.4} /></IconButton></PanelHead>
        <TabStrip role="tablist"><Tab role="tab" $active>Fit</Tab><Tab role="tab">Create</Tab><Tab role="tab">Edit</Tab></TabStrip>
        <Block>
          <BlockTitle $top={20}>Selection type</BlockTitle>
          <IconRow $gap={15} $h={33}>
            {["brush", "rect", "sphereSel", "lasso"].map((n, i) => <IconButton key={n} $active={i === 0} aria-label={n}><Icon n={n} s={20} w={1} /></IconButton>)}
          </IconRow>
          <SliderRow><label htmlFor="brush">Brush size</label><output>10 mm</output><Slider id="brush" type="range" min="0" max="290" defaultValue="10" $fill={8} /></SliderRow>
          <SliderRow><label htmlFor="sens">Segmentation sensitivity</label><output>0,00010</output><Slider id="sens" type="range" min="0" max="100" defaultValue="0" $fill={0} /></SliderRow>
          <ButtonPair><OutlineButton>Invert</OutlineButton><OutlineButton>Deselect</OutlineButton></ButtonPair>
        </Block>
        <Block>
          <BlockTitle $top={16}>Primitives</BlockTitle>
          <IconRow $gap={13} $h={30}>
            {["cyl", "frustum", "ball", "plane", "torus"].map(n => <IconButton key={n} $active={n === "plane"} aria-label={n}><Icon n={n} s={19} w={1} /></IconButton>)}
          </IconRow>
          <BlockTitle $top={7}>Surfaces</BlockTitle>
          <IconRow $gap={13} $h={30}>
            {["surf", "blob"].map(n => <IconButton key={n} aria-label={n}><Icon n={n} s={19} w={1} /></IconButton>)}
          </IconRow>
          <BlockEnd />
        </Block>
        <Modes>
          <legend>Fitting mode</legend>
          {["Exact", "Robust", "Expanding"].map(m => <RadioLabel key={m}><input type="radio" name="mode" defaultChecked={m === "Robust"} />{m}</RadioLabel>)}
        </Modes>
        <Hint>Select a model region to fit the CAD primitive. Ctrl+click selects a region, Alt+click deselects. Drag to adjust region.</Hint>
        <Spacer />
        <FitButton>Fit plane</FitButton>
      </Panel>

      <Viewport>
        <SceneView />
        <UndoBar><IconButton aria-label="Undo"><Icon n="undo" s={13} /></IconButton><IconButton aria-label="Redo"><Icon n="redo" s={13} /></IconButton></UndoBar>
        <TimelineStrip />
        <LogStrip aria-label="Expand log"><Icon n="up" s={10} /></LogStrip>
        <ToolDock>
          <ToolGroup><IconButton $active aria-label="Axes"><Icon n="axes" s={14} /></IconButton></ToolGroup>
          <ToolGroup><IconButton $active aria-label="Section"><Icon n="section" s={14} /></IconButton></ToolGroup>
          <ToolGroup>{["cutA", "cutB", "cutC", "box", "wing"].map(n => <IconButton key={n} $active={n === "box"} $muted aria-label={n}><Icon n={n} w={1.6} /></IconButton>)}</ToolGroup>
          <ToolGroup>{["ruler", "angle", "rings"].map(n => <IconButton key={n} $active={n !== "angle"} $muted aria-label={n}><Icon n={n} s={14} w={1.6} /></IconButton>)}</ToolGroup>
        </ToolDock>
      </Viewport>

      <Aside>
        <AsideHead $h={34}><h2>Objects</h2><Icon n="gear" s={11} w={1.6} /></AsideHead>
        <Table>
          <colgroup><col width="32" /><col width="110" /><col width="20" /><col /></colgroup>
          <thead><tr><th><CheckMark><Icon n="check" s={10} /></CheckMark></th><th>Name</th><th /><th>Error</th></tr></thead>
          <tbody>
            {ITEMS.map((it, i) => <Row key={i} $sel={it.sel}>
              <td>{i < 2 && <CheckMark $dark={it.sel}><Icon n="check" s={10} /></CheckMark>}</td>
              <td>
                {it.kind === "root" && <Cell $gap={2}><Twist open={it.open} /><Dark><Icon n="folder" s={12} /></Dark>{it.name}</Cell>}
                {it.kind === "group" && <Cell $gap={3} $pad={14}><Guide $w={6} /><Twist /><Dark><Icon n="folder" s={12} /></Dark>{it.name}</Cell>}
                {it.kind === "mesh" && <Cell $pad={14}><Guide $w={15} /><Violet><Icon n="cube" s={12} w={1.6} /></Violet>{it.name}</Cell>}
              </td>
              <td><Swatch $c={it.color} /></td>
              <td>{it.error}</td>
            </Row>)}
          </tbody>
        </Table>
        <Spacer />
        <HScroll />
        <Features><AsideHead $h={30}><h2>Features</h2><Icon n="gear" s={11} w={1.6} /></AsideHead></Features>
        <Properties>
          <h3>Properties</h3>
          <PropName><Violet><Icon n="cube" s={13} w={1.6} /></Violet>Det3_0.2_HighPoly</PropName>
          <PropList><dt>Polygons</dt><dd>10 745 489</dd><dt>Size</dt><dd>~184 MB <Icon n="info" s={11} /></dd></PropList>
          <PropList><dt>Resolution</dt><dd>0,2</dd><dt>Scanners</dt><dd>Spider</dd></PropList>
        </Properties>
      </Aside>
    </Main>
    <StatusBar>Free RAM: 9606 MB &nbsp;| Total memory in use: 11740 MB | &nbsp;Ready</StatusBar>

    <Player>
      <Seek type="range" aria-label="Seek" min="0" max="55" defaultValue="0" />
      <Controls>
        <button aria-label="Pause"><svg width="14" height="16" viewBox="0 0 14 16" fill="currentColor"><path d="M1 1h4v14H1zM9 1h4v14H9z" /></svg></button>
        <VolumeButton aria-label="Mute"><svg width="17" height="16" viewBox="0 0 17 16" fill="currentColor"><path d="M1 5h4l5-4v14l-5-4H1z" /><path d="M11.500 5q2 3 0 6M12 1.500q6 6.500 0 13" fill="none" stroke="currentColor" strokeWidth="1.600" /></svg></VolumeButton>
        <TimeText>0:00 / 0:55</TimeText>
        <ControlRight>
          <CC>CC</CC>
          <GearWrap aria-label="Quality"><svg width="17" height="17" viewBox="0 0 20 20"><circle cx="10" cy="10" r="5" fill="none" stroke="currentColor" strokeWidth="4" /><circle cx="10" cy="10" r="8" fill="none" stroke="currentColor" strokeWidth="3" strokeDasharray="4.200 4.177" /></svg><HD>HD</HD></GearWrap>
          <button aria-label="Full screen"><svg width="17" height="16" viewBox="0 0 17 16" fill="none" stroke="currentColor" strokeWidth="2.400"><path d="M1.500 6V1.500H6M11 1.500h4.500V6M15.500 10v4.500H11M6 14.500H1.500V10" /></svg></button>
        </ControlRight>
      </Controls>
    </Player>
  </Page>;
}
